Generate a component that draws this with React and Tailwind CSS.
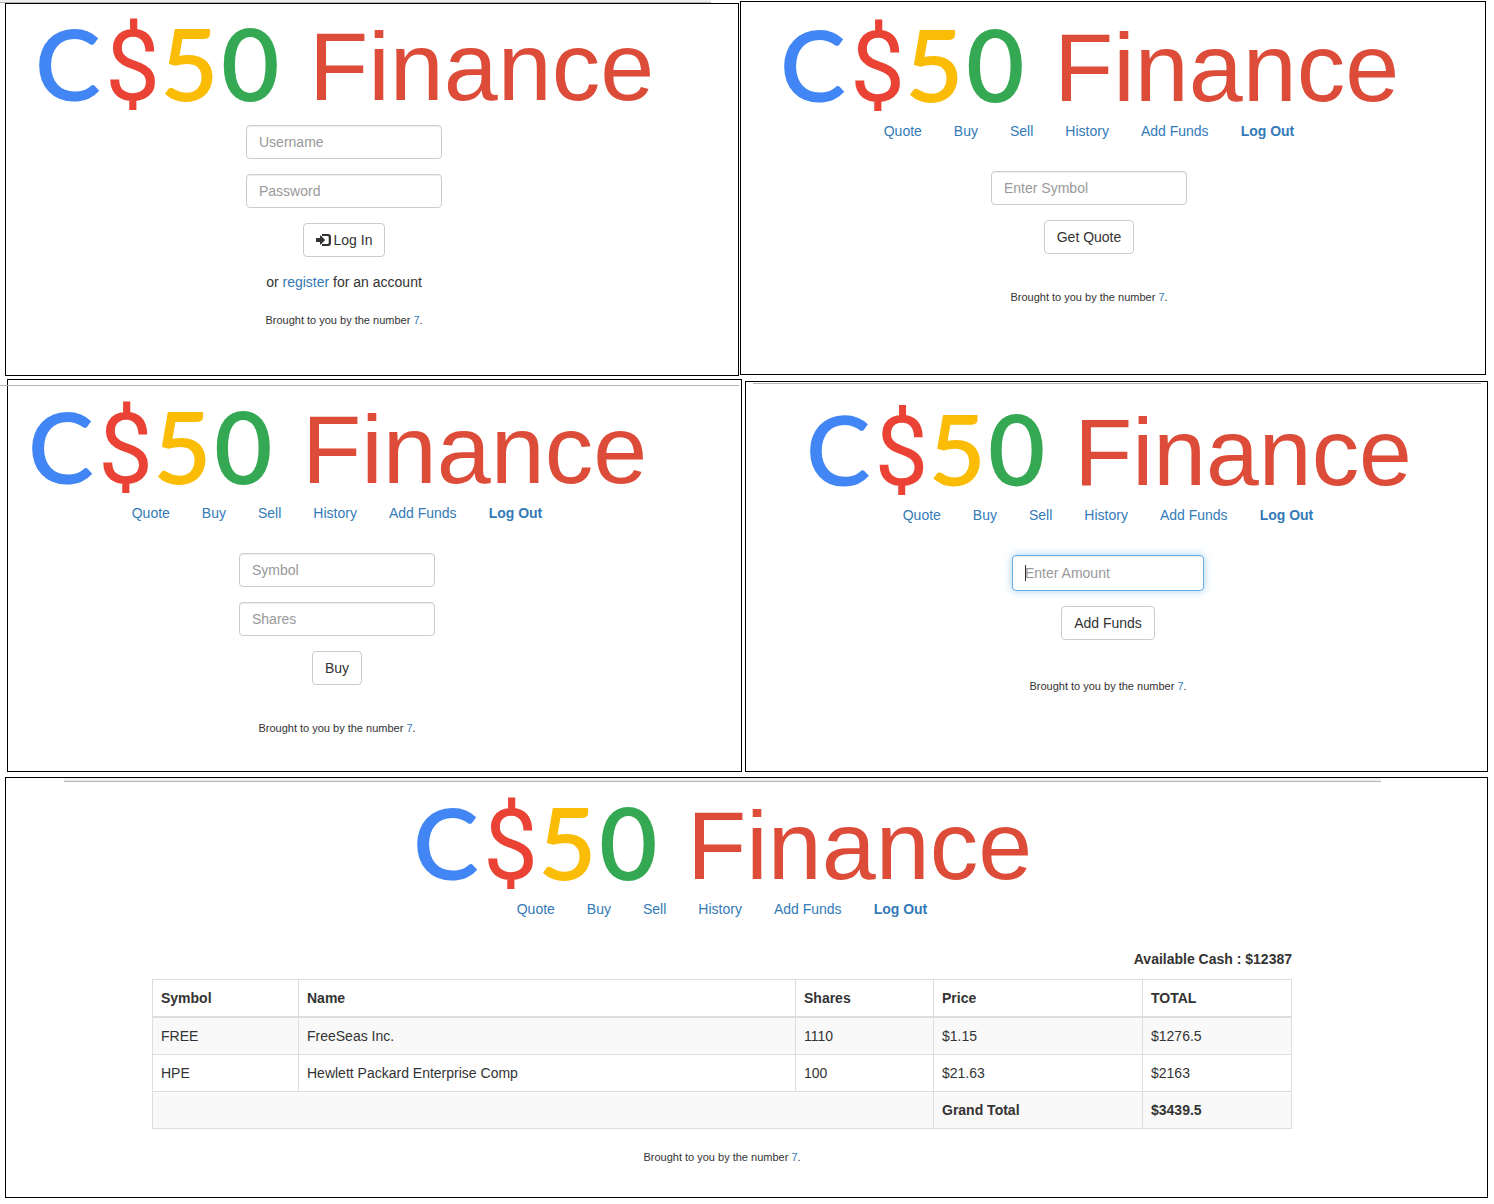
import React from "react";

function Logo({ className = "w-[610px]" }) {
  return (
    <a href="#home" className="block max-w-full">
      <svg
        viewBox="0 0 610 92"
        className={`block h-auto max-w-full overflow-visible ${className}`}
        role="img"
        aria-label="C$50 Finance"
      >
        <g fontFamily="Lato, sans-serif" fontWeight="600" fontSize="101">
          <text x="-4" y="83" fill="#4285f4" fontSize="99">C</text>
          <text x="66" y="82" fill="#ea4335" fontFamily="Roboto, sans-serif" fontSize="98" fontWeight="400">$</text>
          <text x="121" y="83" fill="#fbbc05">5</text>
          <text x="182" y="83" fill="#34a853">0</text>
        </g>
        <text
          x="270"
          y="82"
          fill="#dd4b39"
          fontSize="97"
          fontFamily="'Liberation Sans', Arial, sans-serif"
        >
          Finance
        </text>
      </svg>
    </a>
  );
}

const links = ["Quote", "Buy", "Sell", "History", "Add Funds"];

function Nav() {
  return (
    <nav className="mt-2.5 flex flex-wrap justify-center gap-x-8">
      {links.map((l) => (
        <a key={l} href={"#" + l.toLowerCase().replace(" ", "-")} className="text-[#337ab7]">
          {l}
        </a>
      ))}
      <a href="#logout" className="font-bold text-[#337ab7]">
        Log Out
      </a>
    </nav>
  );
}

function Field({ name, type = "text" }) {
  return (
    <input
      type={type}
      aria-label={name}
      placeholder={name}
      className="h-[34px] w-[196px] rounded-sm border border-[#ccc] bg-white px-3 text-[#555] shadow-[inset_0_1px_1px_rgba(0,0,0,0.075)] outline-none placeholder:text-[#999]"
    />
  );
}

function FocusedField({ name }) {
  return (
    <div className="relative">
      <input
        type="text"
        aria-label={name}
        placeholder={name}
        autoFocus
        className="block h-9 w-48 rounded-sm border border-[#66afe9] bg-white px-3 text-[#555] caret-transparent shadow-[inset_0_1px_1px_rgba(0,0,0,0.075),0_0_8px_rgba(102,175,233,0.6)] outline-none placeholder:text-[#999]"
      />
      <span className="pointer-events-none absolute top-2.5 left-[13px] h-4 w-px bg-[#333]" />
    </div>
  );
}

function Button({ children }) {
  return (
    <button
      type="submit"
      className="flex h-[34px] items-center gap-[3px] rounded-sm border border-[#ccc] bg-white px-3 text-[#333]"
    >
      {children}
    </button>
  );
}

function Form({ children, className = "" }) {
  return (
    <form
      onSubmit={(e) => e.preventDefault()}
      className={`flex flex-col items-center gap-[15px] ${className}`}
    >
      {children}
    </form>
  );
}

function Footer({ className = "" }) {
  return (
    <footer className={`text-center text-[11px] leading-4 ${className}`}>
      Brought to you by the number{" "}
      <a href="#seven" className="text-[#337ab7]">
        7
      </a>
      .
    </footer>
  );
}

function Panel({ children, className = "" }) {
  return (
    <section
      className={`relative flex min-w-0 flex-col items-center border border-black bg-white ${className}`}
    >
      {children}
    </section>
  );
}

function LoginIcon() {
  return (
    <svg viewBox="0 0 15 12" className="h-3 w-[15px]" fill="#333" aria-hidden="true">
      <path d="M.6 4H4V2q0-1 .8-.4L8.700 5.400q.5.600 0 1.200L4.800 10.400Q4 11 4 10V8H.6Q0 8 0 7.400V4.600Q0 4 .6 4z" />
      <path d="M6 0h6a3 3 0 0 1 3 3v6a3 3 0 0 1-3 3H6v-2h5.500a1.200 1.200 0 0 0 1.200-1.200V3.200A1.200 1.200 0 0 0 11.500 2H6z" />
    </svg>
  );
}

const holdings = [
  ["FREE", "FreeSeas Inc.", "1110", "$1.15", "$1276.5"],
  ["HPE", "Hewlett Packard Enterprise Comp", "100", "$21.63", "$2163"],
];

const cell = "border border-[#ddd] p-2 text-left";

function Portfolio() {
  return (
    <div className="mt-[30px] w-[1140px] max-w-full">
      <p className="mb-2.5 text-right font-bold">Available Cash : $12387</p>
      <table className="w-full border-collapse">
        <thead>
          <tr>
            <th className={`${cell} w-[146px] border-b-2`}>Symbol</th>
            <th className={`${cell} border-b-2`}>Name</th>
            <th className={`${cell} w-[138px] border-b-2`}>Shares</th>
            <th className={`${cell} w-[209px] border-b-2`}>Price</th>
            <th className={`${cell} w-[149px] border-b-2`}>TOTAL</th>
          </tr>
        </thead>
        <tbody>
          {holdings.map((row) => (
            <tr key={row[0]} className="odd:bg-[#f9f9f9]">
              {row.map((value, i) => (
                <td key={i} className={cell}>
                  {value}
                </td>
              ))}
            </tr>
          ))}
          <tr className="bg-[#f9f9f9] font-bold">
            <td colSpan={3} className={cell}></td>
            <td className={cell}>Grand Total</td>
            <td className={cell}>$3439.5</td>
          </tr>
        </tbody>
      </table>
    </div>
  );
}

export default function App() {
  return (
    <main className="relative bg-white pb-1.5 font-['Liberation_Sans',Arial,sans-serif] text-sm leading-5 text-[#333]">
      <div className="absolute top-0 left-0 h-[3px] w-[711px] border-b border-[#b4b4b4] bg-[#f0f0f0]" />

      <div className="grid grid-cols-[734fr_746fr] items-start gap-px pt-px pr-2 pl-[5px]">
        <Panel className="mt-0.5 pt-3.5 pr-14 pb-[47px]">
          <Logo />
          <Form className="mt-[15px]">
            <Field name="Username" />
            <Field name="Password" type="password" />
            <Button>
              <LoginIcon />
              Log In
            </Button>
          </Form>
          <p className="mt-[15px]">
            or{" "}
            <a href="#register" className="text-[#337ab7]">
              register
            </a>{" "}
            for an account
          </p>
          <Footer className="mt-5" />
        </Panel>
        <Panel className="pt-[17px] pr-12 pb-[69px]">
          <Logo />
          <Nav />
          <Form className="mt-[30px]">
            <Field name="Enter Symbol" />
            <Button>Get Quote</Button>
          </Form>
          <Footer className="mt-[35px]" />
        </Panel>
      </div>

      <div className="mt-[3px] grid grid-cols-[735fr_743fr] items-end gap-[3px] pr-1.5 pl-[7px]">
        <Panel className="pt-[21px] pr-[75px] pb-[35px]">
          <div className="absolute top-[5px] right-0.5 -left-2 h-px bg-[#b4b4b4]" />
          <Logo />
          <Nav />
          <Form className="mt-[30px]">
            <Field name="Symbol" />
            <Field name="Shares" />
            <Button>Buy</Button>
          </Form>
          <Footer className="mt-[35px]" />
        </Panel>
        <Panel className="pt-[23px] pr-[17px] pb-[77px]">
          <div className="absolute top-px right-1.5 left-[7px] h-px bg-[#b4b4b4]" />
          <Logo className="w-[597px]" />
          <Nav />
          <Form className="mt-[30px]">
            <FocusedField name="Enter Amount" />
            <Button>Add Funds</Button>
          </Form>
          <Footer className="mt-[38px]" />
        </Panel>
      </div>

      <div className="mt-[5px] pr-1.5 pl-[5px]">
        <Panel className="pt-[19px] pr-[49px] pb-8">
          <div className="absolute top-0 right-[106px] left-[58px] h-1 border-b border-[#b4b4b4] bg-[#f0f0f0]" />
          <Logo />
          <Nav />
          <Portfolio />
          <Footer className="mt-5" />
        </Panel>
      </div>
    </main>
  );
}
